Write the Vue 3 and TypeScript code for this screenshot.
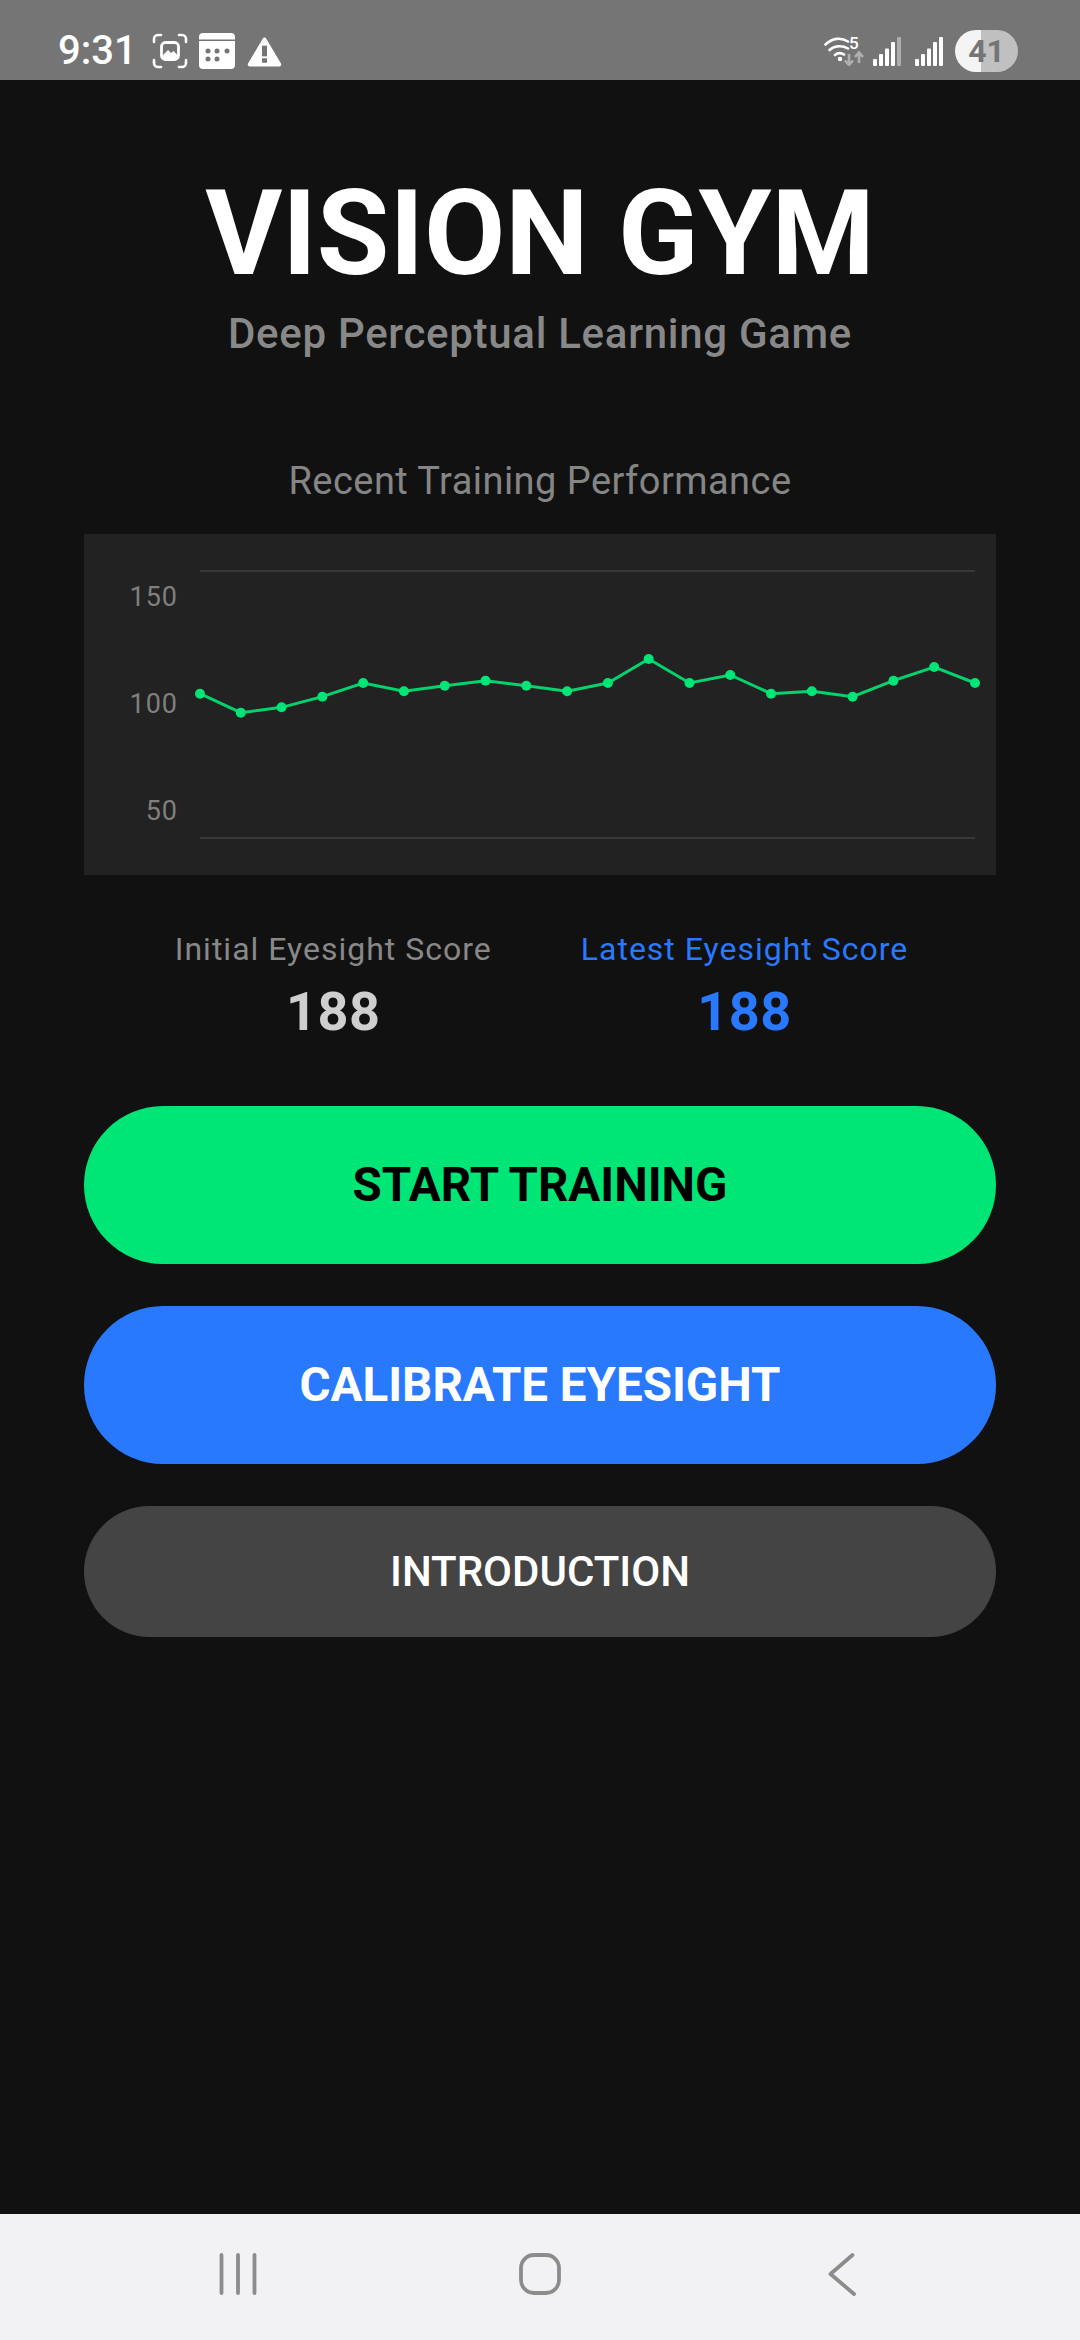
<script setup lang="ts">
const gridLeft = 116
const step = 775 / 19
const zoomY = [521, 578, 562, 530, 489, 514, 497, 482, 497, 514, 489, 417, 489, 465, 521, 514, 530, 482, 441, 489]
const points = zoomY.map((z, i) => ({ x: gridLeft + step * i, y: z / 3 - 14 }))
const line = points.map((p) => `${p.x},${p.y}`).join(' ')
const ticks = [
  { label: '150', y: 63 },
  { label: '100', y: 170 },
  { label: '50', y: 277 },
]
const barHeights = [7, 12, 17.5, 24, 29]
</script>

<template>
  <div class="screen">
    <header class="status">
      <div class="status-left">
        <span class="time">9:31</span>
        <svg class="ic" width="36" height="36" viewBox="0 0 36 36" fill="none">
          <path d="M9 2H6a4 4 0 0 0-4 4v3M27 2h3a4 4 0 0 1 4 4v3M9 34H6a4 4 0 0 1-4-4v-3M27 34h3a4 4 0 0 0 4-4v-3" stroke="#fff" stroke-width="2.6" stroke-linecap="round"/>
          <rect x="9.5" y="9.500" width="17" height="17" rx="4" stroke="#fff" stroke-width="2.8"/>
          <path d="M11 25v-3l5-5 3 3 2.500-2 4 4v3z" fill="#fff"/>
        </svg>
        <svg class="ic" width="36" height="36" viewBox="0 0 36 36">
          <path d="M4 0h28a4 4 0 0 1 4 4v2.500H0V4a4 4 0 0 1 4-4zM0 8h36v24a4 4 0 0 1-4 4H4a4 4 0 0 1-4-4z" fill="#fff"/>
          <g fill="#757575"><circle cx="9" cy="18" r="2.500"/><circle cx="18" cy="18" r="2.500"/><circle cx="28" cy="18" r="2.500"/><circle cx="9" cy="26" r="2.500"/><circle cx="18" cy="26" r="2.500"/></g>
        </svg>
        <svg class="ic warn" width="35" height="31" viewBox="0 0 36 32">
          <path d="M18 1.500a2 2 0 0 1 1.700 1L35 28.500a2 2 0 0 1-1.700 3H2.700a2 2 0 0 1-1.700-3L16.300 2.500a2 2 0 0 1 1.700-1z" fill="#fff"/>
          <rect x="15.400" y="10" width="5.200" height="11" fill="#757575"/><rect x="15.400" y="23" width="5.200" height="4.600" fill="#757575"/>
        </svg>
      </div>
      <div class="status-right">
        <div class="wifi">
          <svg class="wifi-art" width="40" height="30" viewBox="0 0 40 30" fill="none">
            <path d="M1.500 8.500C8 2 17 1 24 5.500M5.500 14C10.500 9.500 18 9 24 12.500M11 19c2.500-2.200 6-2.200 9 -.5" stroke="#fff" stroke-width="2.600" stroke-linecap="round"/>
            <circle cx="16" cy="23" r="2.200" fill="#fff"/>
            <path d="M25 18v11M21 24.500l4 4.500 4-4.500M35 27V16.500M31 21l4-4.500 4 4.500" stroke="#b0b0b0" stroke-width="2.600"/>
          </svg>
          <span class="five">5</span>
        </div>
        <svg class="signal" width="28" height="30" viewBox="0 0 28 30">
          <rect v-for="(h, i) in barHeights" :key="i" :x="i * 6" :y="30 - h" width="4" :height="h" rx="1" :fill="i === 4 ? '#adadad' : '#fff'"/>
        </svg>
        <svg class="signal" width="28" height="30" viewBox="0 0 28 30">
          <rect v-for="(h, i) in barHeights" :key="i" :x="i * 6" :y="30 - h" width="4" :height="h" rx="1" fill="#fff"/>
        </svg>
        <span class="battery">41</span>
      </div>
    </header>

    <main class="content">
      <h1 class="title">VISION GYM</h1>
      <p class="subtitle">Deep Perceptual Learning Game</p>
      <p class="chart-title">Recent Training Performance</p>

      <div class="chart">
        <svg width="912" height="341" viewBox="0 0 912 341">
          <line x1="116" y1="37" x2="891" y2="37" class="grid"/>
          <line x1="116" y1="304" x2="891" y2="304" class="grid"/>
          <text v-for="t in ticks" :key="t.label" x="94" :y="t.y" class="tick">{{ t.label }}</text>
          <polyline :points="line" class="trend"/>
          <circle v-for="(p, i) in points" :key="i" :cx="p.x" :cy="p.y" r="5" class="dot"/>
        </svg>
      </div>

      <div class="scores">
        <div class="score">
          <span class="score-label">Initial Eyesight Score</span>
          <span class="score-value">188</span>
        </div>
        <div class="score latest">
          <span class="score-label">Latest Eyesight Score</span>
          <span class="score-value">188</span>
        </div>
      </div>

      <div class="actions">
        <button class="btn big green">START TRAINING</button>
        <button class="btn big blue">CALIBRATE EYESIGHT</button>
        <button class="btn small grey">INTRODUCTION</button>
      </div>
    </main>

    <footer class="nav">
      <svg width="42" height="42" viewBox="0 0 42 42" fill="none" stroke="#8c8c8c" stroke-width="3.800" stroke-linecap="round">
        <path d="M4.500 2v38M21 2v38M37.500 2v38"/>
      </svg>
      <svg width="42" height="42" viewBox="0 0 42 42" fill="none" stroke="#8c8c8c" stroke-width="3.800">
        <rect x="2" y="2" width="38" height="38" rx="13"/>
      </svg>
      <svg width="28" height="44" viewBox="0 0 28 44" fill="none" stroke="#8c8c8c" stroke-width="3.800" stroke-linecap="round" stroke-linejoin="round">
        <path d="M24.500 3L2.500 22 26 42"/>
      </svg>
    </footer>
  </div>
</template>

<style>
html, body { margin: 0; background: #111111; }
</style>

<style scoped>
.screen {
  width: 1080px;
  height: 2340px;
  display: flex;
  flex-direction: column;
  background: #111111;
  font-family: Roboto, "Liberation Sans", sans-serif;
  overflow: hidden;
}
.status {
  height: 80px;
  flex: none;
  background: #757575;
  display: flex;
  justify-content: space-between;
  align-items: center;
  padding: 22px 62px 0 58px;
  box-sizing: border-box;
}
.status-left, .status-right { display: flex; align-items: center; }
.status-left { gap: 11px; }
.status-right { gap: 14px; }
.time {
  color: #fff;
  font-size: 40px;
  font-weight: 500;
  line-height: 44px;
  margin-right: 4px;
}
.ic { display: block; }
.warn { margin-left: 1px; }
.wifi { position: relative; width: 39px; height: 30px; margin-right: -4px; }
.wifi-art { display: block; }
.five {
  position: absolute;
  left: 25px;
  top: -2px;
  color: #fff;
  font-size: 17px;
  font-weight: 500;
  line-height: 18px;
}
.battery {
  width: 63px;
  height: 42px;
  margin-left: -2px;
  border-radius: 21px;
  background: linear-gradient(90deg, #f4f4f4 0 41%, #c0c0c0 41% 100%);
  color: #757575;
  font-size: 32px;
  font-weight: 700;
  line-height: 42px;
  text-align: center;
}
.content {
  flex: 1;
  padding: 0 84px;
  display: flex;
  flex-direction: column;
  align-items: center;
}
.title {
  margin: 95px 0 0;
  color: #fff;
  font-size: 118px;
  font-weight: 700;
  line-height: 118px;
}
.subtitle {
  margin: 17px 0 0;
  color: #888888;
  font-size: 42px;
  font-weight: 500;
  line-height: 48px;
  letter-spacing: 0.7px;
}
.chart-title {
  margin: 101px 0 0;
  color: #858585;
  font-size: 38px;
  line-height: 44px;
  letter-spacing: 0.45px;
}
.chart {
  margin-top: 31px;
  width: 912px;
  height: 341px;
  flex: none;
  background: #222222;
}
.chart svg { display: block; }
.grid { stroke: #383838; stroke-width: 2; }
.tick {
  fill: #7f7f7f;
  font-size: 27px;
  letter-spacing: 1px;
  text-anchor: end;
  dominant-baseline: central;
}
.trend { fill: none; stroke: #00e676; stroke-width: 3; opacity: 0.9; }
.dot { fill: #00e676; }
.scores {
  margin-top: 56px;
  padding-left: 3px;
  display: flex;
  justify-content: center;
  gap: 89px;
}
.score { display: flex; flex-direction: column; align-items: center; }
.score-label {
  color: #888888;
  font-size: 32px;
  line-height: 36px;
  letter-spacing: 1px;
}
.score-value {
  margin-top: 15px;
  color: #cfcfcf;
  font-size: 54px;
  font-weight: 700;
  line-height: 60px;
  letter-spacing: 0.5px;
}
.latest .score-label, .latest .score-value { color: #2979ff; }
.actions {
  width: 100%;
  margin-top: 64px;
  display: flex;
  flex-direction: column;
  gap: 42px;
}
.btn {
  width: 100%;
  border: none;
  padding: 0;
  font-family: inherit;
  font-weight: 700;
}
.big { height: 158px; border-radius: 79px; font-size: 47.5px; }
.small { height: 131px; border-radius: 66px; font-size: 42px; font-weight: 500; }
.green { background: #00e676; color: #000; }
.blue { background: #2979ff; color: #fff; }
.grey { background: #444444; color: #fff; }
.nav {
  height: 126px;
  flex: none;
  background: #f2f2f4;
  display: grid;
  grid-template-columns: repeat(3, 302px);
  justify-content: center;
  justify-items: center;
  align-items: center;
  padding-bottom: 6px;
  box-sizing: border-box;
}
</style>
